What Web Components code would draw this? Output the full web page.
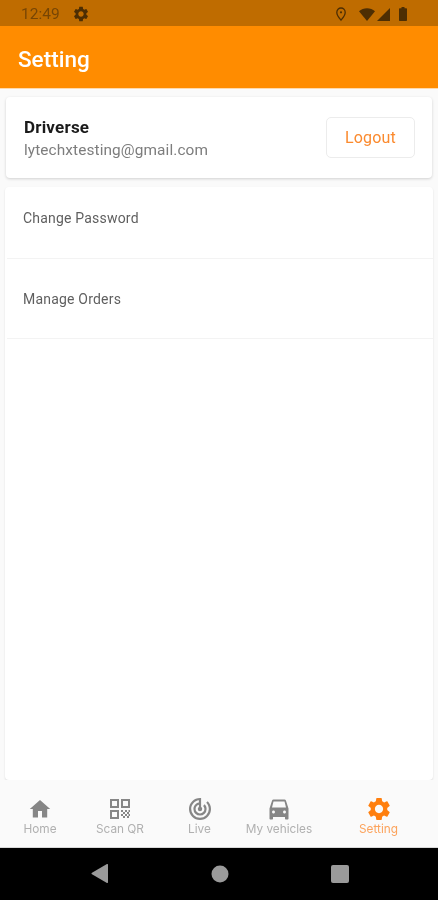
<!DOCTYPE html>
<html>
<head>
<meta charset="utf-8">
<style>
  html, body { margin: 0; padding: 0; background: #fafafa; }
  body { font-family: Roboto, "Liberation Sans", sans-serif; width: 438px; height: 900px; overflow: hidden; }
  #app { filter: blur(0.4px); }
</style>
</head>
<body>
<div id="app">
<app-screen>
  <status-bar slot="status"></status-bar>
  <app-bar slot="bar" title="Setting"></app-bar>
  <profile-card slot="body" name="Driverse" email="lytechxtesting@gmail.com"></profile-card>
  <menu-list slot="body">
    <menu-row>Change Password</menu-row>
    <menu-row>Manage Orders</menu-row>
  </menu-list>
  <tab-bar slot="tabs">
    <tab-item icon="home">Home</tab-item>
    <tab-item icon="qr">Scan QR</tab-item>
    <tab-item icon="live">Live</tab-item>
    <tab-item icon="car">My vehicles</tab-item>
    <tab-item icon="gear" active>Setting</tab-item>
  </tab-bar>
  <nav-keys slot="keys"></nav-keys>
</app-screen>
</div>

<template id="tmpl-screen">
  <style>
  :host { display: flex; flex-flow: column nowrap; width: 438px; height: 900px; background: #fafafa; }
  .body { flex: 1; display: flex; flex-flow: column nowrap; min-height: 0; padding: 8px 5px 0 5px; gap: 9px; }
  </style>
  <slot name="status"></slot>
  <slot name="bar"></slot>
  <div class="body"><slot name="body"></slot></div>
  <slot name="tabs"></slot>
  <slot name="keys"></slot>
</template>

<template id="tmpl-status">
  <style>
  :host { display: flex; align-items: center; height: 26px; flex: none; background: #bf6c00; color: #6b3f05; font: 15.5px Roboto, sans-serif; padding: 2px 0 0 21px; box-sizing: border-box; }
  .time { opacity: .85; }
  svg { display: block; fill: #4d2e03; }
  .gear { margin-left: 12px; }
  .right { margin-left: auto; display: flex; align-items: center; margin-right: 31px; }
  </style>
  <span class="time">12:49</span>
  <svg class="gear" width="18" height="18" viewBox="0 0 24 24"><path d="M19.14 12.94c.04-.3.06-.61.06-.94 0-.32-.02-.64-.07-.94l2.03-1.58c.18-.14.23-.41.12-.61l-1.92-3.32c-.12-.22-.37-.29-.59-.22l-2.39.96c-.5-.38-1.03-.7-1.62-.94l-.36-2.54c-.04-.24-.24-.41-.48-.41h-3.84c-.24 0-.43.17-.47.41l-.36 2.54c-.59.24-1.13.57-1.62.94l-2.39-.96c-.22-.08-.47 0-.59.22L2.74 8.87c-.12.21-.08.47.12.61l2.03 1.58c-.05.3-.09.63-.09.94s.02.64.07.94l-2.03 1.58c-.18.14-.23.41-.12.61l1.92 3.32c.12.22.37.29.59.22l2.39-.96c.5.38 1.03.7 1.62.94l.36 2.54c.05.24.24.41.48.41h3.84c.24 0 .44-.17.47-.41l.36-2.54c.59-.24 1.13-.56 1.62-.94l2.39.96c.22.08.47 0 .59-.22l1.92-3.32c.12-.22.07-.47-.12-.61l-2.01-1.58zM12 15.6c-1.98 0-3.6-1.62-3.6-3.6s1.62-3.6 3.6-3.6 3.6 1.62 3.6 3.6-1.62 3.6-3.6 3.6z"/></svg>
  <div class="right">
    <svg width="12" height="16" viewBox="0 0 12 16" style="margin-right:12px"><path fill="none" stroke="#4d2e03" stroke-width="1.3" d="M6 14.2C3.8 11.6 1.8 9 1.8 6.4 1.8 3.9 3.7 2 6 2s4.2 1.9 4.2 4.4C10.2 9 8.2 11.6 6 14.2z"/><circle cx="6" cy="6.3" r="1.1"/></svg>
    <svg width="16" height="13" viewBox="0 0 16 13" style="margin-right:2px"><path d="M0 3.2C2.2 1.3 5 .2 8 .2s5.800 1.100 8 3L8 13z"/></svg>
    <svg width="13" height="13" viewBox="0 0 13 13" style="margin-right:9px"><path d="M13 0v13H0z"/></svg>
    <svg width="8" height="14" viewBox="0 0 8 14"><path d="M2.5 0h3v1.300H7c.6 0 1 .4 1 1V13c0 .6-.4 1-1 1H1c-.6 0-1-.4-1-1V2.300c0-.6.4-1 1-1h1.500z"/></svg>
  </div>
</template>

<template id="tmpl-bar">
  <style>
  :host { display: flex; align-items: center; height: 63px; flex: none; box-sizing: border-box; padding: 3px 0 0 18px; background: #ff8c00; color: #fff; font: 500 22.5px Roboto, sans-serif; border-bottom: 1px solid #ffd9ab; }
  </style>
  <span class="title"></span>
</template>

<template id="tmpl-profile">
  <style>
  :host { display: flex; align-items: center; justify-content: space-between; height: 81px; flex: none; box-sizing: border-box; margin: 0 1px; padding: 0 17px 0 18px; background: #fff; border-radius: 4px; box-shadow: 0 1px 3px rgba(0,0,0,.17); }
  .name { font: 700 17px/20px Roboto, sans-serif; color: #1b1b1b; letter-spacing: .2px; }
  .email { font: 15.4px/20px Roboto, sans-serif; color: #7d7d7d; margin-top: 3px; letter-spacing: .1px; }
  .who { padding-top: 1px; }
  button { all: unset; box-sizing: border-box; width: 89px; height: 41px; text-align: center; font: 16px Roboto, sans-serif; color: #fb8a2e; background: #fff; border: 1px solid #ececec; border-radius: 5px; letter-spacing: .2px; }
  </style>
  <div class="who"><div class="name"></div><div class="email"></div></div>
  <button>Logout</button>
</template>

<template id="tmpl-list">
  <style>
  :host { display: block; flex: 1; background: #fff; border-radius: 4px; box-shadow: 0 1px 2px rgba(0,0,0,.12); }
  </style>
  <slot></slot>
</template>

<template id="tmpl-row">
  <style>
  :host { display: flex; align-items: center; height: 80px; box-sizing: border-box; padding: 0 0 0 16px; margin-left: 2px; border-bottom: 1px solid #f3f3f3; font: 14px Roboto, sans-serif; color: #5f5f5f; letter-spacing: .2px; }
  :host(:first-child) { height: 72px; padding-bottom: 9px; }
  </style>
  <slot></slot>
</template>

<template id="tmpl-tabs">
  <style>
  :host { display: grid; grid-template-columns: 80px 80px 79px 80px 1fr; height: 67px; flex: none; background: #fafafa; }
  </style>
  <slot></slot>
</template>

<template id="tmpl-tab">
  <style>
  :host { display: flex; flex-flow: column nowrap; align-items: center; padding-top: 17px; box-sizing: border-box; color: #b0b0b0; font: 11.8px Inter, "Open Sans", sans-serif; white-space: nowrap; --c: #868686; }
  :host([active]) { color: #fca35c; --c: #ff7f0e; }
  .ic { width: 24px; height: 24px; }
  svg { display: block; width: 24px; height: 24px; fill: var(--c); stroke: none; overflow: visible; }
  .label { margin-top: 1px; line-height: 15px; }
  </style>
  <div class="ic"></div>
  <div class="label"><slot></slot></div>
</template>

<template id="tmpl-keys">
  <style>
  :host { display: flex; flex: none; height: 53px; align-items: center; background: #000; border-top: 1px solid #d8d8d8; box-sizing: border-box; padding: 0 0 1px 91px; }
  svg { display: block; fill: #9a9a9a; }
  </style>
  <svg width="18" height="19" viewBox="0 0 18 19"><path d="M17 1v17a1 1 0 0 1-1.500.8L1 10.300a1 1 0 0 1 0-1.600L15.500.2A1 1 0 0 1 17 1z"/></svg>
  <svg width="18" height="18" viewBox="0 0 18 18" style="margin-left:102px"><circle cx="9" cy="9" r="8.5"/></svg>
  <svg width="18" height="18" viewBox="0 0 18 18" style="margin-left:102px"><rect width="18" height="18" rx="2"/></svg>
</template>

<script>
const tpl = id => document.getElementById(id).content;
const ICONS = {
  home: '<path d="M10 20.500v-6.500h4v6.500h5.200v-8.500h3L12 3 1.800 12h3v8.500z"/>',
  qr: '<path fill-rule="evenodd" d="M2 2h9v9H2zM4 4v5h5V4zM13 2h9v9h-9zM15 4v5h5V4zM2 13h9v9H2zM4 15v5h5v-5z"/><path d="M13 13h2v2h-2zM17 13h2v2h-2zM20.500 13h1.500v2h-1.500zM15 15h2v2h-2zM19 15h2v2h-2zM13 17h2v2h-2zM17 17h2v2h-2zM20.500 17h1.500v2h-1.500zM15 19h2v2h-2zM19 19h2v2h-2z"/>',
  live: '<path transform="translate(-1.200 -1.200) scale(1.1)" d="M19.070 4.930L17.660 6.340C19.100 7.790 20 9.790 20 12A8 8 0 0 1 12 20A8 8 0 0 1 4 12C4 7.920 7.050 4.560 11 4.070V6.090C8.160 6.570 6 9.030 6 12A6 6 0 0 0 12 18A6 6 0 0 0 18 12C18 10.340 17.330 8.840 16.240 7.760L14.830 9.170C15.550 9.900 16 10.900 16 12A4 4 0 0 1 12 16A4 4 0 0 1 8 12C8 10.140 9.280 8.590 11 8.140V10.280C10.400 10.630 10 11.260 10 12A2 2 0 0 0 12 14A2 2 0 0 0 14 12C14 11.260 13.600 10.620 13 10.280V2H12A10 10 0 0 0 2 12A10 10 0 0 0 12 22A10 10 0 0 0 22 12C22 9.240 20.880 6.740 19.070 4.930Z"/>',
  car: '<path d="M18.920 3.500C18.700 2.900 18.160 2.500 17.500 2.500h-11c-.66 0-1.210.4-1.420 1L2.500 11.500v10c0 .55.45 1 1 1h1.500c.55 0 1-.45 1-1v-1.500h12v1.500c0 .55.45 1 1 1h1.500c.55 0 1-.45 1-1v-10zM6.500 16.500c-.83 0-1.500-.67-1.500-1.500s.67-1.500 1.500-1.500S8 14.170 8 15s-.67 1.500-1.500 1.500zm11 0c-.83 0-1.500-.67-1.500-1.500s.67-1.500 1.500-1.500 1.500.67 1.500 1.500-.67 1.500-1.500 1.500zM5 10.500L6.500 4.500h11l1.500 6z"/>',
  gear: '<path transform="translate(-1.800 -1.800) scale(1.15)" d="M19.140 12.940c.04-.3.060-.61.060-.94 0-.32-.02-.64-.07-.94l2.030-1.580c.18-.14.230-.41.120-.61l-1.920-3.320c-.12-.22-.37-.29-.59-.22l-2.390.96c-.5-.38-1.030-.7-1.620-.94l-.36-2.540c-.04-.24-.24-.41-.48-.41h-3.840c-.24 0-.43.170-.47.410l-.36 2.540c-.59.24-1.130.57-1.620.94l-2.390-.96c-.22-.08-.47 0-.59.22L2.740 8.870c-.12.21-.08.47.12.61l2.030 1.580c-.05.3-.09.63-.09.94s.02.64.07.94l-2.030 1.580c-.18.14-.23.41-.12.61l1.920 3.320c.12.22.37.29.59.22l2.390-.96c.5.38 1.030.7 1.620.94l.36 2.540c.05.24.24.41.48.41h3.840c.24 0 .44-.17.47-.41l.36-2.540c.59-.24 1.130-.56 1.620-.94l2.390.96c.22.08.47 0 .59-.22l1.920-3.320c.12-.22.070-.47-.12-.61l-2.010-1.580zM12 15.600c-1.980 0-3.600-1.620-3.600-3.600s1.620-3.600 3.600-3.600 3.600 1.620 3.600 3.600-1.620 3.600-3.600 3.600z"/>'
};
class Base extends HTMLElement {
  constructor(id) {
    super();
    this.root = this.attachShadow({ mode: 'open' });
    this.root.append(document.importNode(tpl(id), true));
  }
}
customElements.define('app-screen', class extends Base { constructor() { super('tmpl-screen'); } });
customElements.define('status-bar', class extends Base { constructor() { super('tmpl-status'); } });
customElements.define('app-bar', class extends Base {
  constructor() { super('tmpl-bar'); }
  connectedCallback() { this.root.querySelector('.title').textContent = this.getAttribute('title'); }
});
customElements.define('profile-card', class extends Base {
  constructor() { super('tmpl-profile'); }
  connectedCallback() {
    this.root.querySelector('.name').textContent = this.getAttribute('name');
    this.root.querySelector('.email').textContent = this.getAttribute('email');
  }
});
customElements.define('menu-list', class extends Base { constructor() { super('tmpl-list'); } });
customElements.define('menu-row', class extends Base { constructor() { super('tmpl-row'); } });
customElements.define('tab-bar', class extends Base { constructor() { super('tmpl-tabs'); } });
customElements.define('tab-item', class extends Base {
  constructor() { super('tmpl-tab'); }
  connectedCallback() {
    this.root.querySelector('.ic').innerHTML = `<svg viewBox="0 0 24 24">${ICONS[this.getAttribute('icon')]}</svg>`;
  }
});
customElements.define('nav-keys', class extends Base { constructor() { super('tmpl-keys'); } });
</script>
</body>
</html>
